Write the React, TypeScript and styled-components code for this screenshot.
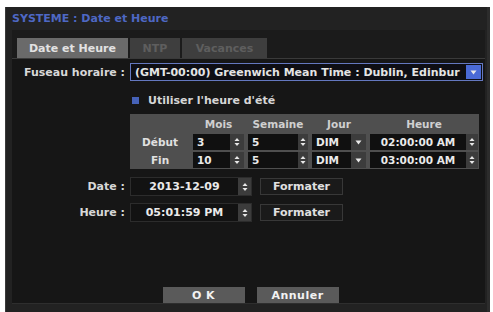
import React from "react";
import styled, { createGlobalStyle } from "styled-components";

const GlobalStyle = createGlobalStyle`
  html, body {
    margin: 0;
    padding: 0;
    background: #ffffff;
  }
  body {
    font-family: "DejaVu Sans", "Liberation Sans", sans-serif;
    font-weight: bold;
    font-size: 11px;
    color: #d6d6d6;
  }
`;

const COLOR = {
  frame: "#222222",
  strip: "#1b1b1b",
  panel: "#161616",
  blue: "#4e68c4",
  field: "#101010",
  spin: "#3c3c3c",
  table: "#4f4f4f",
  text: "#d8d8d8",
};

const Window = styled.div`
  margin: 7px 0 0 5px;
  width: 485px;
  height: 305px;
  background: ${COLOR.frame};
  border-left: 1px solid #3a3a3a;
  border-right: 3px solid #2c2c2c;
  box-sizing: border-box;
  display: flex;
  flex-direction: column;
  padding-bottom: 8px;
`;

const TitleBar = styled.div`
  height: 23px;
  padding: 0 6px;
  display: flex;
  align-items: center;
  color: ${COLOR.blue};
`;

const Inner = styled.div`
  margin: 0 2px 0 6px;
  flex: 1;
  display: flex;
  flex-direction: column;
  border-bottom: 1px solid #2e2e2e;
`;

const TabStrip = styled.div`
  height: 28px;
  background: ${COLOR.strip};
  display: flex;
  align-items: flex-end;
  gap: 2px;
  padding: 0 5px;
`;

const Tab = styled.div<{ $active?: boolean; $w: number }>`
  width: ${(p) => p.$w}px;
  height: 20px;
  display: flex;
  align-items: center;
  justify-content: center;
  background: ${(p) => (p.$active ? "#6a6a6a" : "#3e3e3e")};
  color: ${(p) => (p.$active ? "#e2e2e2" : "#5e5e5e")};
`;

const Content = styled.div`
  flex: 1;
  background: ${COLOR.panel};
  border-top: 1px solid #3a3a3a;
  display: flex;
  flex-direction: column;
  padding-top: 4px;
`;

const FormRow = styled.div<{ $mt?: number }>`
  display: grid;
  grid-template-columns: 113px auto;
  column-gap: 5px;
  align-items: center;
  margin-top: ${(p) => p.$mt ?? 0}px;
`;

const Label = styled.div`
  text-align: right;
  color: ${COLOR.text};
  white-space: nowrap;
`;

const Select = styled.div`
  width: 353px;
  height: 18px;
  box-sizing: border-box;
  border: 1px solid #6478c0;
  background: #0e0e14;
  display: flex;
  align-items: center;
  padding-left: 4px;
  color: #e4e4e4;
  white-space: nowrap;
`;

const SelectText = styled.span`
  flex: 1;
`;

const BlueArrow = styled.div`
  width: 15px;
  height: 14px;
  flex-shrink: 0;
  margin: 0 1px 0 2px;
  background: #4a6ad6;
  display: flex;
  align-items: center;
  justify-content: center;
`;

const CheckLine = styled.div`
  display: flex;
  align-items: center;
  gap: 9px;
  margin: 13px 0 0 120px;
`;

const CheckBox = styled.div`
  width: 7px;
  height: 7px;
  background: #4662b8;
`;

const Table = styled.div`
  margin: 7px 0 0 118px;
  width: 349px;
  background: ${COLOR.table};
  display: grid;
  grid-template-columns: 58px 51px 60px 54px 108px;
  column-gap: 4px;
  row-gap: 2px;
  padding: 1px 3px 1px 1px;
  box-sizing: border-box;
  font-size: 10.5px;
`;

const HeadCell = styled.div`
  height: 17px;
  display: flex;
  align-items: center;
  justify-content: center;
  color: #d0d0d0;
`;

const RowLabel = styled.div`
  height: 16px;
  display: flex;
  align-items: center;
  justify-content: center;
  color: #e0e0e0;
`;

const Field = styled.div<{ $w?: number }>`
  height: 16px;
  width: ${(p) => (p.$w ? `${p.$w}px` : "auto")};
  display: flex;
  align-items: stretch;
  background: ${COLOR.field};
  color: #eaeaea;
`;

const FieldText = styled.div<{ $center?: boolean }>`
  flex: 1;
  display: flex;
  align-items: center;
  justify-content: ${(p) => (p.$center ? "center" : "flex-start")};
  padding-left: ${(p) => (p.$center ? 0 : 4)}px;
  white-space: nowrap;
`;

const Side = styled.div<{ $w: number }>`
  width: ${(p) => p.$w}px;
  background: ${COLOR.spin};
  display: flex;
  align-items: center;
  justify-content: center;
`;

const DateField = styled(Field)`
  height: 17px;
  border: 1px solid #2c2c2c;
  background: #121212;
`;

const Controls = styled.div`
  display: flex;
  align-items: center;
  gap: 8px;
`;

const SmallButton = styled.div`
  width: 83px;
  height: 17px;
  box-sizing: border-box;
  border: 1px solid #383838;
  background: #1a1a1a;
  display: flex;
  align-items: center;
  justify-content: center;
  color: #e0e0e0;
`;

const Footer = styled.div`
  margin-top: auto;
  display: flex;
  justify-content: center;
  gap: 12px;
  padding-left: 4px;
`;

const MainButton = styled.div`
  width: 82px;
  height: 16px;
  background: #5a5a5a;
  display: flex;
  align-items: center;
  justify-content: center;
  color: #f2f2f2;
  letter-spacing: 0.5px;
`;

const Spinner = () => (
  <svg width="6" height="10" viewBox="0 0 6 10">
    <path d="M3 1 L5.5 4 L0.5 4 Z" fill="#e8e8e8" />
    <path d="M3 9 L5.5 6 L0.5 6 Z" fill="#e8e8e8" />
  </svg>
);

const DownArrow = ({ color = "#e8e8e8" }: { color?: string }) => (
  <svg width="7" height="5" viewBox="0 0 7 5">
    <path d="M0.5 0.5 L6.5 0.5 L3.5 4.5 Z" fill={color} />
  </svg>
);

const rows = [
  { label: "Début", mois: "3", semaine: "5", jour: "DIM", heure: "02:00:00 AM" },
  { label: "Fin", mois: "10", semaine: "5", jour: "DIM", heure: "03:00:00 AM" },
];

const App = (): JSX.Element => {
  return (
    <>
      <GlobalStyle />
      <Window>
        <TitleBar>SYSTEME : Date et Heure</TitleBar>
        <Inner>
          <TabStrip>
            <Tab $active $w={111}>Date et Heure</Tab>
            <Tab $w={50}>NTP</Tab>
            <Tab $w={85}>Vacances</Tab>
          </TabStrip>
          <Content>
            <FormRow>
              <Label>Fuseau horaire :</Label>
              <Select>
                <SelectText>(GMT-00:00) Greenwich Mean Time : Dublin, Edinbur</SelectText>
                <BlueArrow>
                  <DownArrow />
                </BlueArrow>
              </Select>
            </FormRow>

            <CheckLine>
              <CheckBox />
              <span>Utiliser l'heure d'été</span>
            </CheckLine>

            <Table>
              <HeadCell />
              <HeadCell>Mois</HeadCell>
              <HeadCell>Semaine</HeadCell>
              <HeadCell>Jour</HeadCell>
              <HeadCell>Heure</HeadCell>
              {rows.map((r) => (
                <React.Fragment key={r.label}>
                  <RowLabel>{r.label}</RowLabel>
                  <Field>
                    <FieldText>{r.mois}</FieldText>
                    <Side $w={14}>
                      <Spinner />
                    </Side>
                  </Field>
                  <Field>
                    <FieldText>{r.semaine}</FieldText>
                    <Side $w={10}>
                      <Spinner />
                    </Side>
                  </Field>
                  <Field>
                    <FieldText>{r.jour}</FieldText>
                    <Side $w={15}>
                      <DownArrow />
                    </Side>
                  </Field>
                  <Field>
                    <FieldText $center>{r.heure}</FieldText>
                    <Side $w={12}>
                      <Spinner />
                    </Side>
                  </Field>
                </React.Fragment>
              ))}
            </Table>

            <FormRow $mt={8}>
              <Label>Date :</Label>
              <Controls>
                <DateField $w={120}>
                  <FieldText $center>2013-12-09</FieldText>
                  <Side $w={13}>
                    <Spinner />
                  </Side>
                </DateField>
                <SmallButton>Formater</SmallButton>
              </Controls>
            </FormRow>

            <FormRow $mt={7}>
              <Label>Heure :</Label>
              <Controls>
                <DateField $w={120}>
                  <FieldText $center>05:01:59 PM</FieldText>
                  <Side $w={13}>
                    <Spinner />
                  </Side>
                </DateField>
                <SmallButton>Formater</SmallButton>
              </Controls>
            </FormRow>

            <Footer>
              <MainButton>O K</MainButton>
              <MainButton>Annuler</MainButton>
            </Footer>
          </Content>
        </Inner>
      </Window>
    </>
  );
};

export default App;
